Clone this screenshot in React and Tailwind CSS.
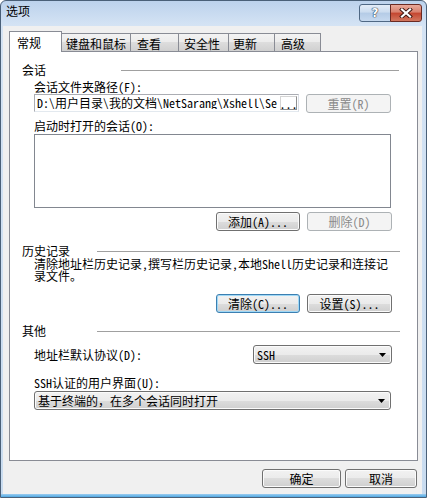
import React from "react";
import clsx from "clsx";

// Win7 style push button
const Btn = ({ children, w, disabled, focused }) => (
  <div
    className={clsx(
      "h-[19px] shrink-0 rounded-[3px] border flex items-center justify-center leading-[12px]",
      w,
      disabled
        ? "border-[#adb2b5] bg-[#f4f4f4] text-[#8a8a8a]"
        : focused
        ? "border-[#3c7fb1] bg-[linear-gradient(#f2f2f2_0%,#ebebeb_50%,#dddddd_50%,#cfcfcf_100%)] shadow-[inset_0_0_0_1px_#9fd8f6]"
        : "border-[#707070] bg-[linear-gradient(#f2f2f2_0%,#ebebeb_50%,#dddddd_50%,#cfcfcf_100%)] shadow-[inset_0_0_0_1px_#fbfbfb]"
    )}
  >
    {children}
  </div>
);

// Drop-down list (looks like a button in Win7)
const Combo = ({ value, w, className }) => (
  <div
    className={clsx(
      "h-[19px] shrink-0 rounded-[3px] border border-[#707070] bg-[linear-gradient(#f2f2f2_0%,#ebebeb_50%,#dddddd_50%,#cfcfcf_100%)] shadow-[inset_0_0_0_1px_#fbfbfb] flex items-center pl-[3px] pr-[5px] leading-[12px]",
      w,
      className
    )}
  >
    <span className="flex-1">{value}</span>
    <svg width="7" height="4" viewBox="0 0 7 4">
      <path d="M0 0h7L3.5 4z" fill="#000" />
    </svg>
  </div>
);

const GroupTitle = ({ label, gap, className }) => (
  <div className={clsx("flex items-center h-[12px]", className)}>
    <span className="ml-[12px] leading-[12px]">{label}</span>
    <div className={clsx("flex-1 h-px bg-[#a0a0a0]", gap)} />
  </div>
);

const tabs = [
  { label: "键盘和鼠标", w: "w-[70px]", pl: "pl-[4px]" },
  { label: "查看", w: "w-[49px]", pl: "pl-[6px]" },
  { label: "安全性", w: "w-[51px]", pl: "pl-[5px]" },
  { label: "更新", w: "w-[47px]", pl: "pl-[4px]" },
  { label: "高级", w: "w-[47px]", pl: "pl-[6px]" },
];

export default function App() {
  return (
    <div className="w-[427px] h-[498px] flex flex-col border border-[#4a6078] rounded-t-[6px] bg-[linear-gradient(#bcd2ec,#d4e3f4_24px,#c9dcf0)] overflow-hidden text-[12px] text-black font-['Noto_Sans_Mono_CJK_SC','Noto_Sans_CJK_SC',sans-serif]">
      {/* Title bar */}
      <div className="h-[25px] flex items-start">
        <span className="ml-[5px] mt-[4px] leading-[12px]">选项</span>
        <div className="ml-auto mt-[3px] mr-[4px] flex">
          <div className="w-[32px] h-[18px] rounded-l-[3px] border border-[#4f6884] bg-[linear-gradient(#e3ecf7_0%,#cbdcef_45%,#b4cbe6_50%,#c6d9ef_100%)] flex items-center justify-center">
            <span className="font-['DejaVu_Sans',sans-serif] font-bold text-[12px] leading-[12px] text-white [text-shadow:0_0_1px_#23364e,0_0_1px_#23364e,0_0_1px_#23364e]">
              ?
            </span>
          </div>
          <div className="w-[32px] h-[18px] -ml-px rounded-r-[3px] border border-[#6a2a22] bg-[linear-gradient(#e9a99a_0%,#d8806d_45%,#c4452f_50%,#d2775f_100%)] flex items-center justify-center">
            <svg width="14" height="10" viewBox="0 0 14 10">
              <path d="M3 1.5l8 7M11 1.5l-8 7" stroke="#3b1510" strokeWidth="4" strokeLinecap="square" />
              <path d="M3 1.5l8 7M11 1.5l-8 7" stroke="#fff" strokeWidth="2.2" strokeLinecap="square" />
            </svg>
          </div>
        </div>
      </div>

      {/* Client area */}
      <div className="flex-1 ml-[2px] mr-[4px] bg-[#f0f0f0] flex flex-col">
        {/* Tab strip */}
        <div className="mt-[5px] ml-[6px] h-[20px] flex items-end">
          <div className="relative z-10 w-[53px] h-[21px] -mb-px border border-b-0 border-[#898c95] bg-white pl-[7px] pt-[5px] leading-[12px]">
            常规
          </div>
          {tabs.map((t) => (
            <div
              key={t.label}
              className={clsx(
                "h-[18px] -ml-px border border-b-0 border-[#898c95] bg-[linear-gradient(#f3f3f3_0%,#ebebeb_50%,#dddddd_50%,#d0d0d0_100%)] pt-[4px] leading-[12px]",
                t.w,
                t.pl
              )}
            >
              {t.label}
            </div>
          ))}
        </div>

        {/* Tab panel */}
        <div className="ml-[6px] w-[409px] h-[410px] border border-[#898c95] bg-white flex flex-col">
          <GroupTitle label="会话" gap="ml-[75px] mr-[18px]" className="mt-[12px]" />
          <div className="mt-[5px] ml-[24px] leading-[12px]">会话文件夹路径(F):</div>
          <div className="mt-[1px] ml-[24px] flex">
            <div className="w-[265px] h-[18px] border border-[#abadb3] border-r-[#dbdfe6] border-b-[#e3e9ef] flex items-center pl-[2px] overflow-hidden whitespace-nowrap leading-[12px]">
              <span className="flex-1 overflow-hidden">D:\用户目录\我的文档\NetSarang\Xshell\Se</span>
              <span className="w-[17px] h-[14px] border border-[#d4d4d4] border-r-[#8f8f8f] border-b-[#8f8f8f] flex items-end justify-center leading-[10px] mr-[1px]">
                ...
              </span>
            </div>
            <div className="ml-[7px]">
              <Btn w="w-[85px]" disabled>
                重置(R)
              </Btn>
            </div>
          </div>
          <div className="mt-[7px] ml-[24px] leading-[12px]">启动时打开的会话(O):</div>
          <div className="mt-[2px] ml-[24px] w-[357px] h-[74px] border border-[#828790] bg-white" />
          <div className="mt-[4px] ml-[206px] flex gap-[7px]">
            <Btn w="w-[84px]">添加(A)...</Btn>
            <Btn w="w-[85px]" disabled>
              删除(D)
            </Btn>
          </div>

          <GroupTitle label="历史记录" gap="ml-[27px] mr-[17px]" className="mt-[14px]" />
          <div className="mt-[1px] ml-[24px] leading-[12px]">
            清除地址栏历史记录,撰写栏历史记录,本地Shell历史记录和连接记
            <br />
            录文件。
          </div>
          <div className="mt-[12px] ml-[206px] flex gap-[7px]">
            <Btn w="w-[84px]" focused>
              清除(C)...
            </Btn>
            <Btn w="w-[85px]">设置(S)...</Btn>
          </div>

          <GroupTitle label="其他" gap="ml-[51px] mr-[17px]" className="mt-[12px]" />
          <div className="mt-[8px] ml-[24px] flex items-center">
            <span className="leading-[12px]">地址栏默认协议(D):</span>
            <Combo value="SSH" w="w-[139px]" className="ml-auto mr-[25px]" />
          </div>
          <div className="mt-[13px] ml-[24px] leading-[12px]">SSH认证的用户界面(U):</div>
          <Combo value="基于终端的，在多个会话同时打开" w="w-[357px]" className="mt-[2px] ml-[24px]" />
        </div>

        {/* Dialog buttons */}
        <div className="mt-[8px] mr-[5px] flex justify-end gap-[4px]">
          <Btn w="w-[79px]">确定</Btn>
          <Btn w="w-[72px]">取消</Btn>
        </div>
      </div>

      {/* bottom frame */}
      <div className="h-[3px] bg-[linear-gradient(#9ccdf0,#4fa8e2)]" />
    </div>
  );
}
